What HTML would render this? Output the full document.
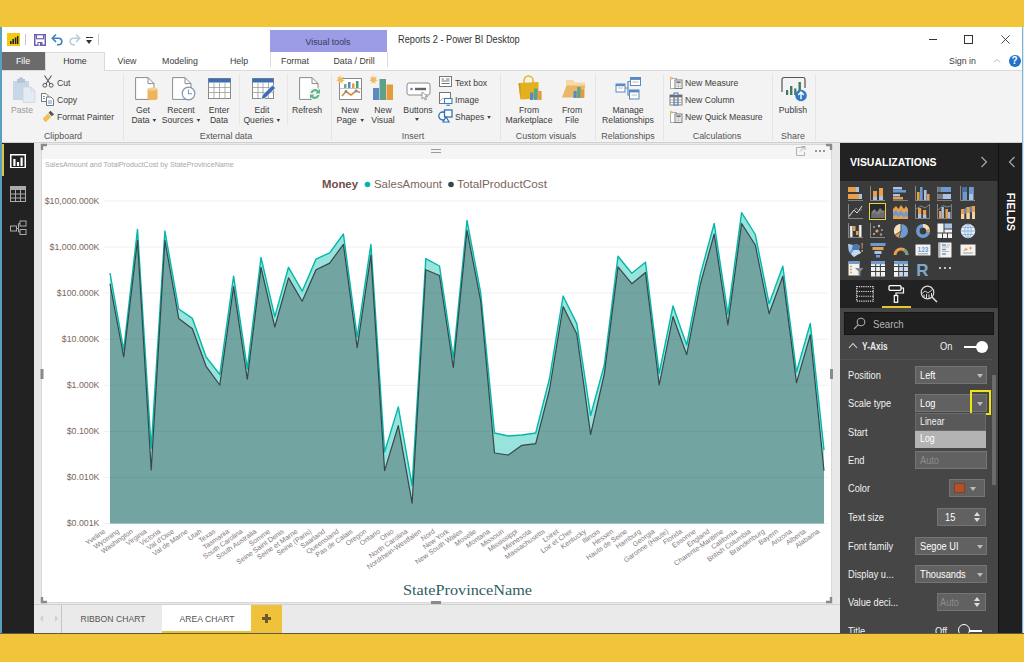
<!DOCTYPE html>
<html><head><meta charset="utf-8"><title>Reports 2 - Power BI Desktop</title>
<style>
*{box-sizing:border-box;margin:0;padding:0}
html,body{width:1024px;height:662px;overflow:hidden;background:#F2C43A;font-family:"Liberation Sans",sans-serif;}
.abs,.abs *{position:absolute}
#win{position:absolute;left:0;top:27px;width:1024px;height:607px;background:#fff;overflow:hidden}
.t{position:absolute;white-space:nowrap;font-size:9.4px;color:#3c3c3c;line-height:12px;transform-origin:0 50%;transform:scaleX(.92)}
.c{transform-origin:50% 50%;transform:translateX(-50%) scaleX(.92);text-align:center}
.da{display:inline-block;width:0;height:0;border-left:2.5px solid transparent;border-right:2.5px solid transparent;border-top:3px solid #444;vertical-align:middle;margin-left:1px}
.yl{font-size:9.8px;fill:#7d6660;font-family:"Liberation Sans",sans-serif}
.xl{font-size:7.05px;fill:#827a7a;font-family:"Liberation Sans",sans-serif}
.sep{position:absolute;width:1px;background:#e5e5e5;top:47px;height:66px}
.pt{position:absolute;white-space:nowrap;font-size:10.5px;color:#f2f2f2;line-height:12px;transform-origin:0 50%;transform:scaleX(.88)}
.dd{position:absolute;height:18px;background:#616161;border:1px solid #747474;color:#fff;font-size:11px;line-height:16px;padding-left:5px}
.arr{position:absolute;width:0;height:0;border-left:3px solid transparent;border-right:3px solid transparent;border-top:4px solid #bbb}
</style></head><body>
<div id="win">
<!-- window borders -->
<div style="position:absolute;left:0;top:0;width:1024px;height:1px;background:#7fb3c9"></div>
<div style="position:absolute;left:0;top:0;width:1.5px;height:607px;background:#5b9fbf;z-index:50"></div>
<div style="position:absolute;right:1px;top:0;width:1px;height:607px;background:#7db4d8;z-index:50"></div><div style="position:absolute;right:0;top:0;width:1px;height:607px;background:#dfe9ee;z-index:50"></div>

<div style="position:absolute;left:0;top:606px;width:1024px;height:1px;background:#5a5a4a;z-index:60"></div>
<!-- TITLE BAR -->
<div id="titlebar" style="position:absolute;left:0;top:0;width:1024px;height:25px;background:#fff">

<!-- app icon -->
<svg style="position:absolute;left:7px;top:6px" width="13" height="13" viewBox="0 0 13 13"><rect width="13" height="13" fill="#F2C811"/><rect x="3" y="8" width="1.6" height="3" fill="#222"/><rect x="5.4" y="6" width="1.6" height="5" fill="#222"/><rect x="7.8" y="4.5" width="1.6" height="6.5" fill="#222"/><rect x="10" y="3" width="1.4" height="8" fill="#222"/></svg>
<div style="position:absolute;left:25px;top:7px;width:1px;height:11px;background:#c8c8c8"></div>
<!-- save -->
<svg style="position:absolute;left:34px;top:7px" width="12" height="12" viewBox="0 0 12 12"><rect x="0.75" y="0.75" width="10.5" height="10.5" fill="#fff" stroke="#6a5fb5" stroke-width="1.5"/><rect x="2.5" y="0.75" width="7" height="4" fill="#fff" stroke="#6a5fb5" stroke-width="1.2"/><rect x="3.5" y="8" width="5" height="3.5" fill="#6a5fb5"/><rect x="4.5" y="9" width="1.5" height="2.5" fill="#fff"/></svg>
<!-- undo -->
<svg style="position:absolute;left:51px;top:6px" width="13" height="13" viewBox="0 0 13 13"><path d="M1.5 5.2 H7.5 A3.3 3.3 0 0 1 7.5 11.8 H6" fill="none" stroke="#3f7fc1" stroke-width="1.6"/><path d="M5 1.5 L1.3 5.2 L5 8.9" fill="none" stroke="#3f7fc1" stroke-width="1.6"/></svg>
<!-- redo -->
<svg style="position:absolute;left:68px;top:6px" width="13" height="13" viewBox="0 0 13 13"><path d="M11.5 5.2 H5.5 A3.3 3.3 0 0 0 5.5 11.8 H7" fill="none" stroke="#b9cfd6" stroke-width="1.6"/><path d="M8 1.5 L11.7 5.2 L8 8.9" fill="none" stroke="#b9cfd6" stroke-width="1.6"/></svg>
<!-- qat dropdown -->
<div style="position:absolute;left:86px;top:10px;width:7px;height:1px;background:#333"></div>
<div style="position:absolute;left:86px;top:13px;width:0;height:0;border-left:3.5px solid transparent;border-right:3.5px solid transparent;border-top:4px solid #333"></div>
<div style="position:absolute;left:98px;top:7px;width:1px;height:11px;background:#c8c8c8"></div>
<!-- visual tools -->
<div style="position:absolute;left:270px;top:3px;width:117px;height:21.5px;background:#9b9be6"></div>
<div class="t c" style="left:328px;top:8.5px;color:#3a3a55;font-size:9.6px">Visual tools</div>
<div class="t" style="left:398px;top:6.5px;color:#333;font-size:10px">Reports 2 - Power BI Desktop</div>
<!-- window controls -->
<div style="position:absolute;left:929px;top:12px;width:8px;height:1px;background:#333"></div>
<div style="position:absolute;left:964px;top:8px;width:9px;height:9px;border:1px solid #333"></div>
<svg style="position:absolute;left:1001px;top:8px" width="9" height="9" viewBox="0 0 11 11"><path d="M0.5 0.5 L10.5 10.5 M10.5 0.5 L0.5 10.5" stroke="#333" stroke-width="1.1"/></svg>

</div>

<!-- TAB ROW -->
<div id="tabs" style="position:absolute;left:0;top:25px;width:1024px;height:18px;background:#fff">

<div style="position:absolute;left:1px;top:0;width:44px;height:18px;background:#6b6b6b"></div>
<div class="t c" style="left:23px;top:3px;color:#fff;font-size:9.6px">File</div>
<div style="position:absolute;left:45px;top:0;width:60px;height:19px;background:#f3f3f3;border:1px solid #dadada;border-bottom:none;z-index:3"></div>
<div class="t c" style="left:75px;top:3px;color:#333;font-size:9.6px;z-index:4">Home</div>
<div class="t c" style="left:127px;top:3px;font-size:9.6px">View</div>
<div class="t c" style="left:180px;top:3px;font-size:9.6px">Modeling</div>
<div class="t c" style="left:239px;top:3px;font-size:9.6px">Help</div>
<div style="position:absolute;left:270px;top:0;width:1px;height:15px;background:#ddd"></div>
<div style="position:absolute;left:387px;top:0;width:1px;height:15px;background:#ddd"></div>
<div class="t c" style="left:295px;top:3px;font-size:9.6px">Format</div>
<div class="t c" style="left:354px;top:3px;font-size:9.6px">Data / Drill</div>
<div class="t" style="left:949px;top:3px;font-size:9.6px">Sign in</div>
<svg style="position:absolute;left:992.5px;top:5.5px" width="8" height="5.3" viewBox="0 0 9 6"><path d="M1 5 L4.5 1.5 L8 5" fill="none" stroke="#b5b5b5" stroke-width="1.1"/></svg>
<div style="position:absolute;left:1008.5px;top:2.5px;width:12px;height:12px;border-radius:6px;background:#1e74c9;color:#fff;font-size:10px;font-weight:bold;line-height:12px;text-align:center">?</div>

</div>

<!-- RIBBON -->
<div id="ribbon" style="position:absolute;left:0;top:43px;width:1024px;height:73px;background:#f3f3f3;border-top:1px solid #dadada;border-bottom:1px solid #d0d0d0">
</div>
<div id="ribbonitems" style="position:absolute;left:0;top:0;width:1024px;height:116px">
<svg style="position:absolute;left:12px;top:50px" width="24" height="26" viewBox="0 0 24 26">
<rect x="1" y="4" width="16" height="19" fill="#c9d6e6"/><rect x="5" y="2" width="8" height="4" fill="#b4c5da"/><rect x="7" y="0.5" width="4" height="3" fill="#b4c5da"/>
<path d="M11 10 H19 L23 14 V25.5 H11 Z" fill="#e4ebf3" stroke="#c3cfdd" stroke-width="0.6"/><path d="M19 10 V14 H23" fill="none" stroke="#c3cfdd" stroke-width="0.6"/></svg>
<div class="t c" style="left:22px;top:76.5px;color:#999">Paste</div>
<svg style="position:absolute;left:42px;top:48px" width="12" height="13" viewBox="0 0 12 13"><path d="M2.5 0.5 L8.2 9 M9.5 0.5 L3.8 9" stroke="#555" stroke-width="1.1" fill="none"/><circle cx="2.8" cy="10.3" r="1.9" fill="none" stroke="#555" stroke-width="1"/><circle cx="9.2" cy="10.3" r="1.9" fill="none" stroke="#555" stroke-width="1"/></svg>
<div class="t" style="left:57px;top:50px;">Cut</div>
<svg style="position:absolute;left:41px;top:66px" width="13" height="13" viewBox="0 0 13 13"><path d="M0.5 0.5 H5 L7 2.5 V8.5 H0.5 Z" fill="#fff" stroke="#666" stroke-width="0.9"/><path d="M5.5 4 H10 L12.5 6.5 V12.5 H5.5 Z" fill="#fff" stroke="#666" stroke-width="0.9"/><path d="M7 8 H11 M7 10 H11" stroke="#3f7fc1" stroke-width="0.8"/><path d="M2 3.5 H4 M2 5.5 H4" stroke="#3f7fc1" stroke-width="0.8"/></svg>
<div class="t" style="left:57px;top:67px;">Copy</div>
<svg style="position:absolute;left:42px;top:83px" width="13" height="13" viewBox="0 0 13 13"><path d="M8.5 0.8 L12 4.2 L9.8 6.2 L6.5 2.8 Z" fill="#555"/><path d="M6 3.5 L9.3 6.8 L4 12 L0.8 8.5 Z" fill="#f0c050"/><path d="M1.5 9.5 L3.5 11.5" stroke="#d9a030" stroke-width="0.8"/></svg>
<div class="t" style="left:57px;top:84px;">Format Painter</div>
<div class="t c" style="left:62.5px;top:103px;color:#555;font-size:9.7px">Clipboard</div>
<div class="sep" style="left:123px"></div>
<svg style="position:absolute;left:135px;top:50px" width="24" height="24" viewBox="0 0 24 24"><path d="M0.6 0.6 H13 L19 6.6 V22.4 H0.6 Z" fill="#fff" stroke="#8a8a8a" stroke-width="1"/><path d="M13 0.6 V6.6 H19" fill="none" stroke="#8a8a8a" stroke-width="1"/>
<path d="M12.5 12 V21.5 A5 1.6 0 0 0 22.5 21.5 V12 Z" fill="#eeb45c"/><ellipse cx="17.5" cy="12" rx="5" ry="1.6" fill="#f6cf92"/></svg>
<div class="t c" style="left:143px;top:76.5px;">Get</div>
<div class="t c" style="left:144px;top:87px;">Data <span class="da"></span></div>
<svg style="position:absolute;left:172px;top:50px" width="24" height="24" viewBox="0 0 24 24"><path d="M0.6 0.6 H13 L19 6.6 V22.4 H0.6 Z" fill="#fff" stroke="#8a8a8a" stroke-width="1"/><path d="M13 0.6 V6.6 H19" fill="none" stroke="#8a8a8a" stroke-width="1"/>
<circle cx="16.5" cy="16.5" r="6.3" fill="#fff" stroke="#7f98b0" stroke-width="1.2"/><path d="M16.5 12.5 V16.8 H20" fill="none" stroke="#7f98b0" stroke-width="1.1"/></svg>
<div class="t c" style="left:181px;top:76.5px;">Recent</div>
<div class="t c" style="left:181px;top:87px;">Sources <span class="da"></span></div>
<svg style="position:absolute;left:208px;top:51px" width="23" height="21" viewBox="0 0 23 21"><rect x="0.5" y="0.5" width="22" height="20" fill="#fff" stroke="#8a8a8a"/><rect x="0.5" y="0.5" width="22" height="4" fill="#3c6db0"/><path d="M0.5 9.5 H22.5 M0.5 14.5 H22.5 M6 4.5 V20.5 M11.5 4.5 V20.5 M17 4.5 V20.5" stroke="#9a9a9a" stroke-width="0.8"/></svg>
<div class="t c" style="left:219px;top:76.5px;">Enter</div>
<div class="t c" style="left:219px;top:87px;">Data</div>
<div class="sep" style="left:239px;background:#e6e6e6;height:50px"></div>
<svg style="position:absolute;left:252px;top:50px" width="24" height="24" viewBox="0 0 24 24"><rect x="0.5" y="1.5" width="21" height="20" fill="#fff" stroke="#8a8a8a"/><rect x="0.5" y="1.5" width="21" height="4" fill="#3c6db0"/><path d="M0.5 10.5 H21.5 M0.5 15.5 H21.5 M6 5.5 V21.5 M11 5.5 V21.5 M16.5 5.5 V21.5" stroke="#9a9a9a" stroke-width="0.8"/><path d="M9 22.5 L10.5 18 L20.5 8 L23.5 11 L13.5 21 Z" fill="#3c6db0" stroke="#fff" stroke-width="0.7"/></svg>
<div class="t c" style="left:262px;top:76.5px;">Edit</div>
<div class="t c" style="left:262px;top:87px;">Queries <span class="da"></span></div>
<div class="sep" style="left:287px;background:#e6e6e6;height:50px"></div>
<svg style="position:absolute;left:299px;top:50px" width="24" height="24" viewBox="0 0 24 24"><path d="M0.6 0.6 H13 L19 6.6 V22.4 H0.6 Z" fill="#fff" stroke="#8a8a8a" stroke-width="1"/><path d="M13 0.6 V6.6 H19" fill="none" stroke="#8a8a8a" stroke-width="1"/>
<circle cx="16" cy="17" r="6.5" fill="#f3f3f3"/><path d="M11.5 16 A4.6 4.6 0 0 1 19.5 13.5 L21 12 V16.5 H16.5 L18 15 A2.6 2.6 0 0 0 13.7 16 Z" fill="#5fb58a"/><path d="M20.5 18 A4.6 4.6 0 0 1 12.5 20.5 L11 22 V17.5 H15.5 L14 19 A2.6 2.6 0 0 0 18.3 18 Z" fill="#5fb58a"/></svg>
<div class="t c" style="left:307px;top:76.5px;">Refresh</div>
<div class="t c" style="left:226px;top:103px;color:#555;font-size:9.7px">External data</div>
<div class="sep" style="left:331px"></div>
<svg style="position:absolute;left:336px;top:48px" width="28" height="27" viewBox="0 0 28 27"><rect x="3.5" y="3.5" width="22" height="21" fill="#fff" stroke="#8a8a8a"/>
<rect x="8" y="9" width="2.5" height="4" fill="#6fa88a"/><rect x="12" y="7" width="2.5" height="6" fill="#5b89c0"/><rect x="16" y="8.5" width="2.5" height="4.5" fill="#e59a3c"/><rect x="20" y="6" width="2.5" height="7" fill="#4f9a7b"/><path d="M4 13.5 H25" stroke="#aaa" stroke-width="0.7"/>
<path d="M6 21 L10 16.5 L15 20 L20 16 L24 17.5" fill="none" stroke="#d9823b" stroke-width="1.6"/><circle cx="10" cy="16.5" r="1.4" fill="#5fa08a"/><circle cx="20" cy="16" r="1.4" fill="#5fa08a"/><path d="M4 0 L5 2.7 L7.8 1.6 L6.6 4.2 L9 5.5 L6.3 6 L6.6 8.8 L4.5 7 L2.5 8.8 L2.6 6 L0 5.5 L2.3 4.2 L1 1.6 L3.4 2.7 Z" fill="#f0b95a"/></svg>
<div class="t c" style="left:350px;top:76.5px;">New</div>
<div class="t c" style="left:350px;top:87px;">Page <span class="da"></span></div>
<svg style="position:absolute;left:369px;top:48px" width="27" height="27" viewBox="0 0 27 27"><rect x="4" y="13" width="6" height="12" fill="#5b89c0"/><rect x="10.5" y="4" width="6.5" height="21" fill="#5fa08a"/><rect x="17.5" y="9.5" width="6.5" height="15.5" fill="#e59a3c"/><path d="M4 0 L5 2.7 L7.8 1.6 L6.6 4.2 L9 5.5 L6.3 6 L6.6 8.8 L4.5 7 L2.5 8.8 L2.6 6 L0 5.5 L2.3 4.2 L1 1.6 L3.4 2.7 Z" fill="#f0b95a"/></svg>
<div class="t c" style="left:383px;top:76.5px;">New</div>
<div class="t c" style="left:383px;top:87px;">Visual</div>
<svg style="position:absolute;left:406px;top:55px" width="26" height="19" viewBox="0 0 26 19"><rect x="1" y="1" width="23" height="12" rx="2" fill="#fff" stroke="#8a8a8a" stroke-width="1"/><circle cx="5.5" cy="7" r="1.3" fill="#5b89c0"/><rect x="9" y="5.8" width="11" height="2.4" fill="#666"/><path d="M16 10 L16 17 L18 15.3 L19.3 18 L20.5 17.4 L19.2 14.8 L21.6 14.6 Z" fill="#fff" stroke="#777" stroke-width="0.7"/></svg>
<div class="t c" style="left:418px;top:76.5px;">Buttons</div>
<div class="da" style="position:absolute;left:415px;top:91px;margin:0"></div>
<svg style="position:absolute;left:439px;top:49px" width="13" height="11" viewBox="0 0 13 11"><rect x="0.5" y="0.5" width="12" height="10" fill="#fff" stroke="#777"/><path d="M2.5 3 H5 M2.5 5 H10.5 M2.5 7.5 H10.5 M7 3 H10.5" stroke="#666" stroke-width="0.9"/></svg>
<div class="t" style="left:455px;top:50px;">Text box</div>
<svg style="position:absolute;left:439px;top:65px" width="14" height="14" viewBox="0 0 14 14"><rect x="0.5" y="0.5" width="11" height="11" fill="#fff" stroke="#777"/><path d="M1 9 L4 6 L6.5 8.5" fill="none" stroke="#999" stroke-width="0.8"/><rect x="5.5" y="6.5" width="7.5" height="5" fill="#fff" stroke="#3c7fc0" stroke-width="1.1"/><path d="M7.5 13.3 H11" stroke="#3c7fc0" stroke-width="1.1"/></svg>
<div class="t" style="left:455px;top:67px;">Image</div>
<svg style="position:absolute;left:438px;top:82px" width="15" height="14" viewBox="0 0 15 14"><circle cx="4.8" cy="7" r="4" fill="#fff" stroke="#2e6fb5" stroke-width="1.3"/><rect x="6.5" y="1" width="7.5" height="7" fill="#fff" stroke="#2e6fb5" stroke-width="1.3"/><path d="M5 13 L8 8 L11 13 Z" fill="#fff" stroke="#2e6fb5" stroke-width="1.2"/></svg>
<div class="t" style="left:455px;top:84px;">Shapes <span class="da"></span></div>
<div class="t c" style="left:413px;top:103px;color:#555;font-size:9.7px">Insert</div>
<div class="sep" style="left:500px"></div>
<svg style="position:absolute;left:517px;top:48px" width="27" height="27" viewBox="0 0 27 27"><path d="M7 8 V5.5 A4.5 4.5 0 0 1 16 5.5 V8" fill="none" stroke="#e7b52a" stroke-width="1.5"/><path d="M1.5 8 L21.5 7 L21.5 23.5 L3.5 24.5 Z" fill="#e3b01f"/><path d="M1.5 8 L3.5 24.5 L3.5 9.5 Z" fill="#c99612"/><rect x="13" y="17.5" width="3.4" height="7.5" fill="#5b89c0"/><rect x="17" y="13.5" width="3.6" height="11.5" fill="#5fa08a"/><rect x="21.2" y="16" width="3.4" height="9" fill="#e59a3c"/></svg>
<div class="t c" style="left:529px;top:76.5px;">From</div>
<div class="t c" style="left:529px;top:87px;">Marketplace</div>
<svg style="position:absolute;left:561px;top:50px" width="26" height="23" viewBox="0 0 26 23"><path d="M5 3 H12 L14 5.5 H24 V20 H5 Z" fill="#f5d9a6"/><path d="M1 20.5 L5.5 8.5 H24.5 L20 20.5 Z" fill="#eab765"/><rect x="12.5" y="14" width="3.2" height="7" fill="#5b89c0"/><rect x="16.2" y="10" width="3.4" height="11" fill="#5fa08a"/><rect x="20" y="12.5" width="3.2" height="8.5" fill="#e59a3c"/></svg>
<div class="t c" style="left:572px;top:76.5px;">From</div>
<div class="t c" style="left:572px;top:87px;">File</div>
<div class="t c" style="left:546px;top:103px;color:#555;font-size:9.7px">Custom visuals</div>
<div class="sep" style="left:595px"></div>
<svg style="position:absolute;left:615px;top:48px" width="27" height="27" viewBox="0 0 27 27"><path d="M10 13 H13 V6.500 H16 M13 13 V20 H16" fill="none" stroke="#5b89c0" stroke-width="1.2"/><rect x="1" y="9" width="9" height="8" fill="#fff" stroke="#5b89c0" stroke-width="1"/><rect x="1" y="9" width="9" height="2.2" fill="#5b89c0"/><rect x="15.5" y="2.500" width="10" height="8" fill="#fff" stroke="#5b89c0" stroke-width="1"/><rect x="15.5" y="2.500" width="10" height="2.4" fill="#5b89c0"/><rect x="14.5" y="15" width="9.5" height="9" fill="#fff" stroke="#5b89c0" stroke-width="1"/><rect x="14.5" y="15" width="9.5" height="2.4" fill="#5b89c0"/><path d="M3 13 H8 M17.5 7 H23.5 M16.5 20 H22" stroke="#aaa" stroke-width="0.8"/></svg>
<div class="t c" style="left:628px;top:76.5px;">Manage</div>
<div class="t c" style="left:628px;top:87px;">Relationships</div>
<div class="t c" style="left:628px;top:103px;color:#555;font-size:9.7px">Relationships</div>
<div class="sep" style="left:663px"></div>
<svg style="position:absolute;left:669px;top:49px" width="14" height="13" viewBox="0 0 14 13"><rect x="1.5" y="2.5" width="6" height="10" fill="#fff" stroke="#999" stroke-width="0.8"/><rect x="6" y="4" width="7" height="8.5" fill="#fff" stroke="#6e6e6e" stroke-width="0.9"/><rect x="7.3" y="5.3" width="4.4" height="2" fill="#777"/><path d="M7.5 9 H11.5 M7.5 10.8 H11.5" stroke="#777" stroke-width="0.9" stroke-dasharray="1 0.6"/><path d="M2.2 0 L2.8 1.4 L4.3 1.6 L3.1 2.6 L3.5 4 L2.2 3.2 L0.9 4 L1.3 2.6 L0.1 1.6 L1.6 1.4 Z" fill="#f0b95a"/></svg>
<div class="t" style="left:685px;top:50px;">New Measure</div>
<svg style="position:absolute;left:669px;top:65px" width="14" height="14" viewBox="0 0 14 14"><rect x="1" y="3" width="12" height="10" fill="#fff" stroke="#777" stroke-width="0.9"/><rect x="5" y="1" width="4" height="12" fill="#dbe7f5" stroke="#3c6db0" stroke-width="0.9"/><rect x="1" y="3" width="12" height="2.3" fill="#6a6a6a"/><path d="M1 8 H13 M1 10.5 H13 M5 3 V13 M9 3 V13" stroke="#888" stroke-width="0.7"/></svg>
<div class="t" style="left:685px;top:67px;">New Column</div>
<svg style="position:absolute;left:669px;top:83px" width="14" height="13" viewBox="0 0 14 13"><rect x="1.5" y="2.5" width="6" height="10" fill="#fff" stroke="#999" stroke-width="0.8"/><rect x="6" y="4" width="7" height="8.5" fill="#fff" stroke="#6e6e6e" stroke-width="0.9"/><rect x="7.3" y="5.3" width="4.4" height="2" fill="#777"/><path d="M7.5 9 H11.5 M7.5 10.8 H11.5" stroke="#777" stroke-width="0.9" stroke-dasharray="1 0.6"/><path d="M2.2 0 L2.8 1.4 L4.3 1.6 L3.1 2.6 L3.5 4 L2.2 3.2 L0.9 4 L1.3 2.6 L0.1 1.6 L1.6 1.4 Z" fill="#f0b95a"/></svg>
<div class="t" style="left:685px;top:84px;">New Quick Measure</div>
<div class="t c" style="left:717px;top:103px;color:#555;font-size:9.7px">Calculations</div>
<div class="sep" style="left:772px"></div>
<svg style="position:absolute;left:780px;top:49px" width="28" height="27" viewBox="0 0 28 27"><path d="M2 16 V3.5 A2 2 0 0 1 4 1.5 H23 A2 2 0 0 1 25 3.5 V12" fill="none" stroke="#555" stroke-width="1.2"/><rect x="6" y="14" width="2.2" height="5" fill="#3d7a5f"/><rect x="10" y="10" width="2.4" height="9" fill="#3d7a5f"/><rect x="14.2" y="12.5" width="2.2" height="6.5" fill="#3d7a5f"/><rect x="18.5" y="6" width="2.4" height="10" fill="#3d7a5f"/><circle cx="21" cy="19.5" r="5.8" fill="#2f79c5"/><path d="M21 23.2 V16.2 M18.2 19 L21 16 L23.8 19" fill="none" stroke="#fff" stroke-width="1.4"/></svg>
<div class="t c" style="left:793px;top:76.5px;">Publish</div>
<div class="t c" style="left:793px;top:103px;color:#555;font-size:9.7px">Share</div>
<div class="sep" style="left:815px"></div>
</div>

<!-- MAIN -->
<div id="main" style="position:absolute;left:0;top:116px;width:1024px;height:491px;background:#e8e8e8">
  <div id="leftnav" style="position:absolute;left:1px;top:0;width:33px;height:491px;background:#222">
  
<div style="position:absolute;left:0;top:1px;width:2.5px;height:32px;background:#dcc648"></div>
<svg style="position:absolute;left:9px;top:10.500px" width="16" height="14.500" viewBox="0 0 16 14.500"><rect x="0.75" y="0.75" width="14.5" height="13" fill="none" stroke="#fff" stroke-width="1.5"/><rect x="3.300" y="5" width="2.200" height="7" fill="#fff"/><rect x="6.900" y="8" width="2.200" height="4" fill="#fff"/><rect x="10.500" y="3.500" width="2.200" height="8.500" fill="#fff"/></svg>
<svg style="position:absolute;left:9px;top:43.300px" width="16" height="16" viewBox="0 0 16 16"><rect x="0.5" y="0.5" width="15" height="15" fill="none" stroke="#aaa" stroke-width="1"/><rect x="0.5" y="0.5" width="15" height="3.5" fill="#aaa"/><path d="M0.5 8 H15.5 M0.5 12 H15.5 M5.5 4 V15.5 M10.5 4 V15.5" stroke="#aaa" stroke-width="1"/></svg>
<svg style="position:absolute;left:9px;top:77px" width="17" height="16" viewBox="0 0 17 16"><rect x="0.5" y="6" width="6" height="5" fill="none" stroke="#aaa"/><rect x="10" y="1" width="6" height="5" fill="none" stroke="#aaa"/><rect x="10" y="9.5" width="6" height="5" fill="none" stroke="#aaa"/><path d="M6.5 8.5 H8.5 V3.5 H10 M8.5 8.5 V12 H10" fill="none" stroke="#aaa"/></svg>

  </div>
  <div id="visual" style="position:absolute;left:41px;top:1px;width:791px;height:459px;background:#fff;border:1px solid #d8d8d8">
    <div style="position:absolute;left:0;top:0;width:789px;height:14px;background:#f5f5f5"></div>
  </div>
  <div id="pagetabs" style="position:absolute;left:34px;top:461px;width:806px;height:30px;background:#eaeaea;border-top:1px solid #d2d2d2">
  
<svg style="position:absolute;left:5px;top:9px" width="20" height="9" viewBox="0 0 20 9"><path d="M4 1 L1 4.5 L4 8 Z M16 1 L19 4.5 L16 8 Z" fill="#cfcfcf"/></svg>
<div style="position:absolute;left:27px;top:0;width:1px;height:28px;background:#c4c4c4"></div>
<div class="t c" style="left:79px;top:8px;font-size:9.4px;color:#555">RIBBON CHART</div>
<div style="position:absolute;left:128px;top:0px;width:89px;height:28px;background:#fff;border-bottom:2px solid #e8c52c"></div>
<div class="t c" style="left:173px;top:8px;font-size:9.4px;color:#555">AREA CHART</div>
<div style="position:absolute;left:217px;top:0px;width:31px;height:28px;background:#f0c13a"></div>
<div style="position:absolute;left:228px;top:12px;width:9px;height:3px;background:#6b5a2a"></div>
<div style="position:absolute;left:231px;top:9px;width:3px;height:9px;background:#6b5a2a"></div>

  </div>
</div>

<!-- CHART SVG in page coords (offset by window top 27) -->
<svg style="position:absolute;left:0;top:-27px" width="840" height="662" viewBox="0 0 840 662">
<line x1="104" x2="828" y1="201.0" y2="201.0" stroke="#f0f0f0" stroke-width="1"/>
<g transform="translate(99.5,203.7) scale(0.9,1)"><text x="0" y="0" text-anchor="end" class="yl">$10,000.000K</text></g>
<line x1="104" x2="828" y1="247.1" y2="247.1" stroke="#f0f0f0" stroke-width="1"/>
<g transform="translate(99.5,249.8) scale(0.9,1)"><text x="0" y="0" text-anchor="end" class="yl">$1,000.000K</text></g>
<line x1="104" x2="828" y1="293.1" y2="293.1" stroke="#f0f0f0" stroke-width="1"/>
<g transform="translate(99.5,295.8) scale(0.9,1)"><text x="0" y="0" text-anchor="end" class="yl">$100.000K</text></g>
<line x1="104" x2="828" y1="339.2" y2="339.2" stroke="#f0f0f0" stroke-width="1"/>
<g transform="translate(99.5,341.9) scale(0.9,1)"><text x="0" y="0" text-anchor="end" class="yl">$10.000K</text></g>
<line x1="104" x2="828" y1="385.3" y2="385.3" stroke="#f0f0f0" stroke-width="1"/>
<g transform="translate(99.5,388.0) scale(0.9,1)"><text x="0" y="0" text-anchor="end" class="yl">$1.000K</text></g>
<line x1="104" x2="828" y1="431.4" y2="431.4" stroke="#f0f0f0" stroke-width="1"/>
<g transform="translate(99.5,434.1) scale(0.9,1)"><text x="0" y="0" text-anchor="end" class="yl">$0.100K</text></g>
<line x1="104" x2="828" y1="477.4" y2="477.4" stroke="#f0f0f0" stroke-width="1"/>
<g transform="translate(99.5,480.1) scale(0.9,1)"><text x="0" y="0" text-anchor="end" class="yl">$0.010K</text></g>
<line x1="104" x2="828" y1="523.5" y2="523.5" stroke="#f0f0f0" stroke-width="1"/>
<g transform="translate(99.5,526.2) scale(0.9,1)"><text x="0" y="0" text-anchor="end" class="yl">$0.001K</text></g>
<polygon points="110.0,523.5 110.0,273.2 123.7,350.0 137.5,229.4 151.2,448.3 164.9,231.0 178.7,309.0 192.4,318.4 206.1,357.0 219.8,374.5 233.6,276.2 247.3,368.7 261.0,257.5 274.8,316.6 288.5,267.3 302.2,291.2 316.0,259.1 329.7,252.8 343.4,234.0 357.2,337.0 370.9,244.4 384.6,452.0 398.3,406.9 412.1,485.6 425.8,258.7 439.5,266.0 453.3,358.0 467.0,220.5 480.7,293.0 494.5,433.0 508.2,436.0 521.9,435.0 535.7,433.0 549.4,379.0 563.1,296.0 576.8,323.6 590.6,415.5 604.3,365.0 618.0,256.3 631.8,273.2 645.5,262.2 659.2,373.4 673.0,306.0 686.7,345.0 700.4,274.4 714.2,223.5 727.9,314.2 741.6,212.7 755.3,234.5 769.1,303.7 782.8,266.2 796.5,372.0 810.3,323.4 824.0,450.0 824.0,523.5" fill="#01B8AA" fill-opacity="0.4"/>
<polygon points="110.0,523.5 110.0,283.7 123.7,357.0 137.5,240.4 151.2,470.0 164.9,240.4 178.7,318.4 192.4,328.7 206.1,366.3 219.8,385.0 233.6,286.6 247.3,379.2 261.0,267.3 274.8,327.0 288.5,277.9 302.2,301.3 316.0,269.7 329.7,263.1 343.4,244.4 357.2,347.6 370.9,255.0 384.6,470.6 398.3,425.6 412.1,503.2 425.8,269.7 439.5,275.5 453.3,367.5 467.0,230.3 480.7,301.0 494.5,453.0 508.2,455.0 521.9,445.3 535.7,443.7 549.4,390.0 563.1,306.5 576.8,334.0 590.6,434.3 604.3,374.0 618.0,266.9 631.8,283.7 645.5,272.5 659.2,385.0 673.0,316.5 686.7,354.6 700.4,284.0 714.2,234.0 727.9,324.8 741.6,223.5 755.3,245.0 769.1,313.7 782.8,276.2 796.5,382.7 810.3,334.8 824.0,470.7 824.0,523.5" fill="#374649" fill-opacity="0.4"/>
<polyline points="110.0,273.2 123.7,350.0 137.5,229.4 151.2,448.3 164.9,231.0 178.7,309.0 192.4,318.4 206.1,357.0 219.8,374.5 233.6,276.2 247.3,368.7 261.0,257.5 274.8,316.6 288.5,267.3 302.2,291.2 316.0,259.1 329.7,252.8 343.4,234.0 357.2,337.0 370.9,244.4 384.6,452.0 398.3,406.9 412.1,485.6 425.8,258.7 439.5,266.0 453.3,358.0 467.0,220.5 480.7,293.0 494.5,433.0 508.2,436.0 521.9,435.0 535.7,433.0 549.4,379.0 563.1,296.0 576.8,323.6 590.6,415.5 604.3,365.0 618.0,256.3 631.8,273.2 645.5,262.2 659.2,373.4 673.0,306.0 686.7,345.0 700.4,274.4 714.2,223.5 727.9,314.2 741.6,212.7 755.3,234.5 769.1,303.7 782.8,266.2 796.5,372.0 810.3,323.4 824.0,450.0" fill="none" stroke="#01B8AA" stroke-width="1.4" stroke-linejoin="round"/>
<polyline points="110.0,283.7 123.7,357.0 137.5,240.4 151.2,470.0 164.9,240.4 178.7,318.4 192.4,328.7 206.1,366.3 219.8,385.0 233.6,286.6 247.3,379.2 261.0,267.3 274.8,327.0 288.5,277.9 302.2,301.3 316.0,269.7 329.7,263.1 343.4,244.4 357.2,347.6 370.9,255.0 384.6,470.6 398.3,425.6 412.1,503.2 425.8,269.7 439.5,275.5 453.3,367.5 467.0,230.3 480.7,301.0 494.5,453.0 508.2,455.0 521.9,445.3 535.7,443.7 549.4,390.0 563.1,306.5 576.8,334.0 590.6,434.3 604.3,374.0 618.0,266.9 631.8,283.7 645.5,272.5 659.2,385.0 673.0,316.5 686.7,354.6 700.4,284.0 714.2,234.0 727.9,324.8 741.6,223.5 755.3,245.0 769.1,313.7 782.8,276.2 796.5,382.7 810.3,334.8 824.0,470.7" fill="none" stroke="#374649" stroke-width="1.2" stroke-linejoin="round"/>
<text transform="translate(106.0,532.5) rotate(-35)" text-anchor="end" class="xl">Yveline</text>
<text transform="translate(119.7,532.5) rotate(-35)" text-anchor="end" class="xl">Wyoming</text>
<text transform="translate(133.5,532.5) rotate(-35)" text-anchor="end" class="xl">Washington</text>
<text transform="translate(147.2,532.5) rotate(-35)" text-anchor="end" class="xl">Virginia</text>
<text transform="translate(160.9,532.5) rotate(-35)" text-anchor="end" class="xl">Victoria</text>
<text transform="translate(174.7,532.5) rotate(-35)" text-anchor="end" class="xl">Val d&#39;Oise</text>
<text transform="translate(188.4,532.5) rotate(-35)" text-anchor="end" class="xl">Val de Marne</text>
<text transform="translate(202.1,532.5) rotate(-35)" text-anchor="end" class="xl">Utah</text>
<text transform="translate(215.8,532.5) rotate(-35)" text-anchor="end" class="xl">Texas</text>
<text transform="translate(229.6,532.5) rotate(-35)" text-anchor="end" class="xl">Tasmania</text>
<text transform="translate(243.3,532.5) rotate(-35)" text-anchor="end" class="xl">South Carolina</text>
<text transform="translate(257.0,532.5) rotate(-35)" text-anchor="end" class="xl">South Australia</text>
<text transform="translate(270.8,532.5) rotate(-35)" text-anchor="end" class="xl">Somme</text>
<text transform="translate(284.5,532.5) rotate(-35)" text-anchor="end" class="xl">Seine Saint Denis</text>
<text transform="translate(298.2,532.5) rotate(-35)" text-anchor="end" class="xl">Seine et Marne</text>
<text transform="translate(312.0,532.5) rotate(-35)" text-anchor="end" class="xl">Seine (Paris)</text>
<text transform="translate(325.7,532.5) rotate(-35)" text-anchor="end" class="xl">Saarland</text>
<text transform="translate(339.4,532.5) rotate(-35)" text-anchor="end" class="xl">Queensland</text>
<text transform="translate(353.2,532.5) rotate(-35)" text-anchor="end" class="xl">Pas de Calais</text>
<text transform="translate(366.9,532.5) rotate(-35)" text-anchor="end" class="xl">Oregon</text>
<text transform="translate(380.6,532.5) rotate(-35)" text-anchor="end" class="xl">Ontario</text>
<text transform="translate(394.3,532.5) rotate(-35)" text-anchor="end" class="xl">Ohio</text>
<text transform="translate(408.1,532.5) rotate(-35)" text-anchor="end" class="xl">North Carolina</text>
<text transform="translate(421.8,532.5) rotate(-35)" text-anchor="end" class="xl">Nordrhein-Westfalen</text>
<text transform="translate(435.5,532.5) rotate(-35)" text-anchor="end" class="xl">Nord</text>
<text transform="translate(449.3,532.5) rotate(-35)" text-anchor="end" class="xl">New York</text>
<text transform="translate(463.0,532.5) rotate(-35)" text-anchor="end" class="xl">New South Wales</text>
<text transform="translate(476.7,532.5) rotate(-35)" text-anchor="end" class="xl">Moselle</text>
<text transform="translate(490.5,532.5) rotate(-35)" text-anchor="end" class="xl">Montana</text>
<text transform="translate(504.2,532.5) rotate(-35)" text-anchor="end" class="xl">Missouri</text>
<text transform="translate(517.9,532.5) rotate(-35)" text-anchor="end" class="xl">Mississippi</text>
<text transform="translate(531.7,532.5) rotate(-35)" text-anchor="end" class="xl">Minnesota</text>
<text transform="translate(545.4,532.5) rotate(-35)" text-anchor="end" class="xl">Massachusetts</text>
<text transform="translate(559.1,532.5) rotate(-35)" text-anchor="end" class="xl">Loiret</text>
<text transform="translate(572.8,532.5) rotate(-35)" text-anchor="end" class="xl">Loir et Cher</text>
<text transform="translate(586.6,532.5) rotate(-35)" text-anchor="end" class="xl">Kentucky</text>
<text transform="translate(600.3,532.5) rotate(-35)" text-anchor="end" class="xl">Illinois</text>
<text transform="translate(614.0,532.5) rotate(-35)" text-anchor="end" class="xl">Hessen</text>
<text transform="translate(627.8,532.5) rotate(-35)" text-anchor="end" class="xl">Hauts de Seine</text>
<text transform="translate(641.5,532.5) rotate(-35)" text-anchor="end" class="xl">Hamburg</text>
<text transform="translate(655.2,532.5) rotate(-35)" text-anchor="end" class="xl">Georgia</text>
<text transform="translate(669.0,532.5) rotate(-35)" text-anchor="end" class="xl">Garonne (Haute)</text>
<text transform="translate(682.7,532.5) rotate(-35)" text-anchor="end" class="xl">Florida</text>
<text transform="translate(696.4,532.5) rotate(-35)" text-anchor="end" class="xl">Essonne</text>
<text transform="translate(710.2,532.5) rotate(-35)" text-anchor="end" class="xl">England</text>
<text transform="translate(723.9,532.5) rotate(-35)" text-anchor="end" class="xl">Charente-Maritime</text>
<text transform="translate(737.6,532.5) rotate(-35)" text-anchor="end" class="xl">California</text>
<text transform="translate(751.3,532.5) rotate(-35)" text-anchor="end" class="xl">British Columbia</text>
<text transform="translate(765.1,532.5) rotate(-35)" text-anchor="end" class="xl">Brandenburg</text>
<text transform="translate(778.8,532.5) rotate(-35)" text-anchor="end" class="xl">Bayern</text>
<text transform="translate(792.5,532.5) rotate(-35)" text-anchor="end" class="xl">Arizona</text>
<text transform="translate(806.3,532.5) rotate(-35)" text-anchor="end" class="xl">Alberta</text>
<text transform="translate(820.0,532.5) rotate(-35)" text-anchor="end" class="xl">Alabama</text>

<text x="45" y="167" style="font-size:7.2px;fill:#a8a8a8;font-family:'Liberation Sans',sans-serif">SalesAmount and TotalProductCost by StateProvinceName</text>
<text x="322" y="188" style="font-size:11.5px;font-weight:bold;fill:#6f4e47;font-family:'Liberation Sans',sans-serif" textLength="36" lengthAdjust="spacingAndGlyphs">Money</text>
<circle cx="367.500" cy="184.5" r="2.8" fill="#01B8AA"/>
<text x="374" y="188" style="font-size:11.5px;fill:#7d635c;font-family:'Liberation Sans',sans-serif" textLength="68" lengthAdjust="spacingAndGlyphs">SalesAmount</text>
<circle cx="451" cy="184.5" r="2.8" fill="#374649"/>
<text x="457" y="188" style="font-size:11.5px;fill:#7d635c;font-family:'Liberation Sans',sans-serif" textLength="90" lengthAdjust="spacingAndGlyphs">TotalProductCost</text>
<text x="403" y="595" textLength="129" lengthAdjust="spacingAndGlyphs" style="font-size:15.5px;fill:#2f5d63;font-family:'Liberation Serif',serif">StateProvinceName</text>
<!-- header icons -->
<path d="M431 149.500 H441 M431 152.500 H441" stroke="#999" stroke-width="1"/>
<path d="M803.500 147.500 H796.500 V155.500 H804.500 V152 M800 151.500 L805 146.500 M801.500 146.500 H805 V150" fill="none" stroke="#aaa" stroke-width="0.9"/>
<circle cx="816" cy="151" r="1" fill="#777"/><circle cx="820" cy="151" r="1" fill="#777"/><circle cx="824" cy="151" r="1" fill="#777"/>
<!-- selection handles -->
<path d="M42 150 V145 H47" fill="none" stroke="#8a8a8a" stroke-width="2.4"/>
<path d="M826 145 H831 V150" fill="none" stroke="#8a8a8a" stroke-width="2.4"/>
<path d="M42 597 V602 H47" fill="none" stroke="#8a8a8a" stroke-width="2.4"/>
<path d="M826 602 H831 V597" fill="none" stroke="#8a8a8a" stroke-width="2.4"/>
<rect x="431" y="601" width="10" height="3" fill="#8a8a8a"/>
<rect x="40.500" y="369" width="3" height="10" fill="#8a8a8a"/>
<rect x="830" y="369" width="3" height="10" fill="#8a8a8a"/>

</svg>

<!-- RIGHT PANEL -->
<div id="viz" style="position:absolute;left:840px;top:116px;width:158px;height:491px;background:#222;overflow:hidden">
<div class="pt" style="left:10px;top:13px;font-weight:bold;font-size:11.5px;color:#fff;transform:scaleX(.91)">VISUALIZATIONS</div>
<svg style="position:absolute;left:140px;top:13px" width="8" height="12" viewBox="0 0 8 12"><path d="M1.500 1 L6.500 6 L1.500 11" fill="none" stroke="#a8a8a8" stroke-width="1.2"/></svg>
<div style="position:absolute;left:0;top:38px;width:158px;height:99px;background:#3b3b3b;border-right:1px solid #2a2a2a"></div>
<svg style="position:absolute;left:8.0px;top:42.5px" width="16" height="16" viewBox="0 0 16 16"><rect x="0" y="1" width="8" height="5" fill="#e8a04c"/><rect x="8" y="1" width="3" height="5" fill="#a9c4e6"/><rect x="0" y="8" width="11" height="5" fill="#e8a04c"/><rect x="11" y="8" width="3" height="5" fill="#a9c4e6"/><path d="M0 14.5 H15" stroke="#9a9a9a" stroke-width="0.7"/></svg>
<svg style="position:absolute;left:30.3px;top:42.5px" width="16" height="16" viewBox="0 0 16 16"><path d="M0.5 0 V14.5 H15" fill="none" stroke="#9a9a9a" stroke-width="0.8"/><rect x="3" y="5" width="4" height="9" fill="#e8a04c"/><rect x="3" y="11" width="4" height="3" fill="#a9c4e6"/><rect x="9" y="2" width="4" height="12" fill="#e8a04c"/><rect x="9" y="10" width="4" height="4" fill="#a9c4e6"/></svg>
<svg style="position:absolute;left:52.6px;top:42.5px" width="16" height="16" viewBox="0 0 16 16"><rect x="0" y="1" width="9" height="2.5" fill="#a9c4e6"/><rect x="0" y="4" width="13" height="2.5" fill="#6d9bd1"/><rect x="0" y="8" width="7" height="2.5" fill="#a9c4e6"/><rect x="0" y="11" width="10" height="2.5" fill="#e8a04c"/><path d="M0 14.5 H15" stroke="#9a9a9a" stroke-width="0.7"/></svg>
<svg style="position:absolute;left:74.9px;top:42.5px" width="16" height="16" viewBox="0 0 16 16"><path d="M0.5 0 V14.5 H15" fill="none" stroke="#9a9a9a" stroke-width="0.8"/><rect x="2" y="6" width="2.6" height="8" fill="#e8a04c"/><rect x="5" y="1" width="2.6" height="13" fill="#6d9bd1"/><rect x="9" y="4" width="2.6" height="10" fill="#a9c4e6"/><rect x="12" y="8" width="2.6" height="6" fill="#e8a04c"/></svg>
<svg style="position:absolute;left:97.2px;top:42.5px" width="16" height="16" viewBox="0 0 16 16"><rect x="0" y="1" width="14" height="5" fill="#6d9bd1"/><rect x="0" y="1" width="4" height="5" fill="#777"/><rect x="0" y="8" width="14" height="5" fill="#a9c4e6"/><rect x="0" y="8" width="6" height="5" fill="#777"/><path d="M0 0 V15 M0 14.5 H15" stroke="#9a9a9a" stroke-width="0.7"/></svg>
<svg style="position:absolute;left:119.5px;top:42.5px" width="16" height="16" viewBox="0 0 16 16"><path d="M0.5 0 V14.5 H15" fill="none" stroke="#9a9a9a" stroke-width="0.8"/><rect x="2.500" y="1" width="4.5" height="13" fill="#6d9bd1"/><rect x="2.500" y="1" width="4.5" height="5" fill="#4d6f9c"/><rect x="9" y="1" width="4.5" height="13" fill="#a9c4e6"/><rect x="9" y="1" width="4.5" height="7" fill="#6d9bd1"/></svg>
<svg style="position:absolute;left:8.0px;top:61.3px" width="16" height="16" viewBox="0 0 16 16"><path d="M0.5 0 V14.5 H15" fill="none" stroke="#9a9a9a" stroke-width="0.8"/><path d="M1 12 L6 6 L9 9 L14 2" fill="none" stroke="#f2f2f2" stroke-width="0.9"/><path d="M1 13 L8 4 L11 7 L14 5" fill="none" stroke="#9a9a9a" stroke-width="0.8"/></svg>
<div style="position:absolute;left:29px;top:60px;width:17px;height:17px;border:1.5px solid #e8d44a;background:#2a2a2a"></div><svg style="position:absolute;left:30.3px;top:61.3px" width="16" height="16" viewBox="0 0 16 16"><path d="M1.500 14 V8 L4.500 5 L7 8 L10 4 L13 7 L14.5 6 V14 Z" fill="#808080"/><path d="M1.500 14 V11 L5 8 L8 11 L11 8 L14.5 10 V14 Z" fill="#6a6a78"/></svg>
<svg style="position:absolute;left:52.6px;top:61.3px" width="16" height="16" viewBox="0 0 16 16"><path d="M0 15 V5 L3 2 L5.500 5 L8 1 L11 5 L13 2 L15 5 V15 Z" fill="#e8a04c"/><path d="M0 15 V9 L3 6 L5.500 9 L8 6 L11 10 L13 7 L15 9 V15 Z" fill="#6d9bd1"/><path d="M0 15 V13 L3 11 L5.500 13 L8 11 L11 13.500 L13 12 L15 13 V15 Z" fill="#e8a04c"/></svg>
<svg style="position:absolute;left:74.9px;top:61.3px" width="16" height="16" viewBox="0 0 16 16"><path d="M0.5 0 V14.5 H15" fill="none" stroke="#9a9a9a" stroke-width="0.8"/><rect x="3" y="4" width="3.2" height="10" fill="#e8a04c"/><rect x="3" y="10" width="3.2" height="4" fill="#a9c4e6"/><rect x="8" y="6" width="3.2" height="8" fill="#e8a04c"/><rect x="8" y="11" width="3.2" height="3" fill="#a9c4e6"/><path d="M1 5 L6 2 L10 4 L14 1" fill="none" stroke="#9a9a9a" stroke-width="0.8"/><path d="M14.5 0 V14" stroke="#9a9a9a" stroke-width="0.7"/></svg>
<svg style="position:absolute;left:97.2px;top:61.3px" width="16" height="16" viewBox="0 0 16 16"><path d="M0.5 0 V14.5 H15" fill="none" stroke="#9a9a9a" stroke-width="0.8"/><rect x="2" y="7" width="2.4" height="7" fill="#e8a04c"/><rect x="4.500" y="3" width="2.4" height="11" fill="#a9c4e6"/><rect x="8.500" y="5" width="2.4" height="9" fill="#e8a04c"/><rect x="11" y="8" width="2.4" height="6" fill="#a9c4e6"/><path d="M1 6 L6 1.500 L10 3 L14 2" fill="none" stroke="#9a9a9a" stroke-width="0.8"/><path d="M14.5 0 V14" stroke="#9a9a9a" stroke-width="0.7"/></svg>
<svg style="position:absolute;left:119.5px;top:61.3px" width="16" height="16" viewBox="0 0 16 16"><path d="M1 5 H4 L7 3 H9 L12 2 H15 V8 H12 L9 9 H7 L4 10 H1 Z" fill="#6d9bd1" opacity="0.8"/><rect x="1" y="5" width="3.2" height="10" fill="#e8a04c"/><rect x="6.500" y="3" width="3.2" height="12" fill="#e8a04c"/><rect x="12" y="2" width="3" height="13" fill="#e8a04c"/><rect x="1" y="10" width="3.2" height="5" fill="#f3d3a8"/><rect x="6.500" y="9" width="3.2" height="6" fill="#f3d3a8"/><rect x="12" y="8" width="3" height="7" fill="#f3d3a8"/></svg>
<svg style="position:absolute;left:8.0px;top:80.1px" width="16" height="16" viewBox="0 0 16 16"><path d="M0.5 0 V14.5 H15" fill="none" stroke="#9a9a9a" stroke-width="0.8"/><rect x="2" y="3" width="2.5" height="11" fill="#f2f2f2"/><rect x="5" y="3" width="2.5" height="5" fill="#e8a04c"/><rect x="8" y="8" width="2.5" height="4" fill="#e8a04c"/><rect x="11" y="2" width="2.5" height="12" fill="#f2f2f2"/><path d="M2 3 V14 H4.500 V3 M11 2 V14 H13.500 V2" fill="none" stroke="#9a9a9a" stroke-width="0.5"/></svg>
<svg style="position:absolute;left:30.3px;top:80.1px" width="16" height="16" viewBox="0 0 16 16"><path d="M0.5 0 V14.5 H15" fill="none" stroke="#9a9a9a" stroke-width="0.8"/><circle cx="4" cy="4" r="1.1" fill="#9a9a9a"/><circle cx="9" cy="3" r="1.2" fill="#a9c4e6"/><circle cx="7" cy="8" r="1.6" fill="#e8a04c"/><circle cx="12" cy="7" r="1.1" fill="#9a9a9a"/><circle cx="4" cy="11" r="1" fill="#a9c4e6"/><circle cx="11" cy="11.500" r="1.2" fill="#9a9a9a"/></svg>
<svg style="position:absolute;left:52.6px;top:80.1px" width="16" height="16" viewBox="0 0 16 16"><circle cx="8" cy="8" r="7" fill="#6d9bd1"/><path d="M8 8 L8 1 A7 7 0 0 0 2.200 12 Z" fill="#f5ddb8"/><path d="M8 8 L2.200 12 A7 7 0 0 0 6 14.700 Z" fill="#e8a04c"/><path d="M8 8 L8 1 M8 8 L2.200 12 M8 8 L6 14.700" stroke="#3c3c3c" stroke-width="0.8"/></svg>
<svg style="position:absolute;left:74.9px;top:80.1px" width="16" height="16" viewBox="0 0 16 16"><circle cx="8" cy="8" r="5.2" fill="none" stroke="#6d9bd1" stroke-width="3.6"/><path d="M8 2.800 A5.2 5.2 0 0 1 13 6.500" fill="none" stroke="#f5ddb8" stroke-width="3.600"/><path d="M13 6.500 A5.2 5.2 0 0 1 13.100 9" fill="none" stroke="#e8a04c" stroke-width="3.600"/></svg>
<svg style="position:absolute;left:97.2px;top:80.1px" width="16" height="16" viewBox="0 0 16 16"><rect x="0.5" y="0.5" width="6" height="9" fill="#f2f2f2"/><rect x="7.500" y="0.5" width="7.5" height="5" fill="#a9c4e6"/><rect x="7.500" y="6.500" width="7.5" height="3" fill="#f2f2f2"/><rect x="0.5" y="10.500" width="4.5" height="4.5" fill="#f2f2f2"/><rect x="6" y="10.500" width="4" height="4.500" fill="#f2f2f2"/><rect x="11" y="10.500" width="4" height="4.500" fill="#f2f2f2"/></svg>
<svg style="position:absolute;left:119.5px;top:80.1px" width="16" height="16" viewBox="0 0 16 16"><circle cx="8" cy="8" r="6.800" fill="#e6f0fa" stroke="#f2f2f2" stroke-width="0.8"/><path d="M1.200 8 H14.800 M8 1.200 V14.800 M2.500 4.500 H13.500 M2.500 11.500 H13.500" stroke="#7fa6d4" stroke-width="0.8" fill="none"/><ellipse cx="8" cy="8" rx="3.300" ry="6.800" fill="none" stroke="#7fa6d4" stroke-width="0.8"/></svg>
<svg style="position:absolute;left:8.0px;top:98.9px" width="16" height="16" viewBox="0 0 16 16"><path d="M0 2 L5 3 L9 2 L12 4 L11 8 L13 11 L9 13 L6 15 L3 12 L1 10 Z" fill="#6d9bd1"/><path d="M0 2 L5 3 L4 7 L1 10 Z" fill="#a9c4e6"/><path d="M5 3 L9 2 L12 4 L11 8 L6 8 L4 7 Z" fill="#4f79ae"/><path d="M6 8 L11 8 L13 11 L9 13 L6 15 L3 12 Z" fill="#c8d8ec"/><path d="M13.500 1 L14.700 1 L14.400 7 L13.800 7 Z" fill="#e8a04c"/><circle cx="14.100" cy="9" r="0.9" fill="#e8a04c"/></svg>
<svg style="position:absolute;left:30.3px;top:98.9px" width="16" height="16" viewBox="0 0 16 16"><rect x="0.5" y="1" width="15" height="3" fill="#6d9bd1"/><rect x="2.500" y="5" width="11" height="3" fill="#e8a04c"/><rect x="4.500" y="9" width="7" height="3" fill="#a9c4e6"/><rect x="6" y="13" width="4" height="2.500" fill="#6d9bd1"/></svg>
<svg style="position:absolute;left:52.6px;top:98.9px" width="16" height="16" viewBox="0 0 16 16"><path d="M2 13 A6 6 0 0 1 14 13" fill="none" stroke="#e8a04c" stroke-width="3"/><path d="M11 7.800 A6 6 0 0 1 14 13" fill="none" stroke="#6fa08a" stroke-width="3"/></svg>
<svg style="position:absolute;left:74.9px;top:98.9px" width="16" height="16" viewBox="0 0 16 16"><rect x="0.5" y="2.500" width="15" height="11" fill="#f2f2f2"/><text x="8" y="10" text-anchor="middle" style="font-size:6.500px;font-weight:bold;fill:#6d9bd1;font-family:Liberation Sans,sans-serif">123</text><path d="M3 11.800 H13" stroke="#888" stroke-width="0.8"/></svg>
<svg style="position:absolute;left:97.2px;top:98.9px" width="16" height="16" viewBox="0 0 16 16"><rect x="1.500" y="0.500" width="13" height="15" fill="#f2f2f2"/><rect x="1.500" y="0.500" width="2" height="15" fill="#bbb"/><path d="M5 3 H9 M5 7.500 H9 M5 12 H9" stroke="#6d9bd1" stroke-width="1.6"/><path d="M10 3 H13 M5 5 H12 M5 9.500 H12" stroke="#aaa" stroke-width="0.8"/></svg>
<svg style="position:absolute;left:119.5px;top:98.9px" width="16" height="16" viewBox="0 0 16 16"><rect x="0.5" y="2.500" width="15" height="11" fill="#f2f2f2"/><path d="M3 9 L6 5.500 L8 8 Z" fill="#e8a04c"/><path d="M9 6 L10.500 4.500 L12 6 L10.500 8 Z" fill="#e8a04c"/><path d="M3 11 H13" stroke="#888" stroke-width="0.8"/></svg>
<svg style="position:absolute;left:8.0px;top:117.7px" width="16" height="16" viewBox="0 0 16 16"><rect x="0.5" y="0.500" width="11" height="14" fill="#f2f2f2"/><rect x="0.5" y="0.500" width="11" height="2.500" fill="#6d9bd1"/><path d="M2 5.500 H4 M2 8.500 H4 M2 11.500 H4" stroke="#e8a04c" stroke-width="1.4"/><path d="M7 7 H15.500 L12.500 10.500 V15 L10.500 13.500 V10.500 Z" fill="#8a8a8a"/></svg>
<svg style="position:absolute;left:30.3px;top:117.7px" width="16" height="16" viewBox="0 0 16 16"><rect x="1" y="0.500" width="14" height="15" fill="#f2f2f2"/><path d="M1 5.500 H15 M1 10.500 H15 M5.700 3 V15.500 M10.400 3 V15.500" stroke="#3c3c3c" stroke-width="1"/><rect x="1" y="0.500" width="14" height="2.700" fill="#6d9bd1"/></svg>
<svg style="position:absolute;left:52.6px;top:117.7px" width="16" height="16" viewBox="0 0 16 16"><rect x="1" y="0.500" width="14" height="15" fill="#c9d7ec"/><rect x="1" y="0.500" width="4.500" height="15" fill="#f2f2f2"/><path d="M1 5.500 H15 M1 10.500 H15 M5.700 3 V15.500 M10.400 3 V15.500" stroke="#3c3c3c" stroke-width="1"/><rect x="1" y="0.500" width="14" height="2.700" fill="#6d9bd1"/></svg>
<svg style="position:absolute;left:74.9px;top:117.7px" width="16" height="16" viewBox="0 0 16 16"><text x="7.500" y="14.500" text-anchor="middle" style="font-size:17px;font-weight:bold;fill:#7ea6c9;font-family:Liberation Sans,sans-serif">R</text></svg>
<svg style="position:absolute;left:97.2px;top:117.7px" width="16" height="16" viewBox="0 0 16 16"><circle cx="3" cy="7" r="1" fill="#f2f2f2"/><circle cx="8" cy="7" r="1" fill="#f2f2f2"/><circle cx="13" cy="7" r="1" fill="#f2f2f2"/></svg>
<svg style="position:absolute;left:16px;top:143px" width="18" height="16" viewBox="0 0 18 16"><rect x="0.7" y="0.700" width="16.500" height="14.500" fill="none" stroke="#ddd" stroke-width="1.2" stroke-dasharray="1.2 1"/><path d="M0.700 5.500 H17.300 M0.700 10.300 H17.300" stroke="#ddd" stroke-width="1.1" stroke-dasharray="1.2 1"/></svg>
<svg style="position:absolute;left:48px;top:142px" width="17" height="18" viewBox="0 0 17 18"><rect x="1" y="0.700" width="12" height="4.600" rx="1" fill="none" stroke="#fff" stroke-width="1.3"/><path d="M13 3 H15.500 V8 H8 V10.500" fill="none" stroke="#fff" stroke-width="1.2"/><rect x="6.300" y="10.500" width="3.400" height="6.800" fill="none" stroke="#fff" stroke-width="1.2"/></svg>
<svg style="position:absolute;left:80px;top:142px" width="18" height="18" viewBox="0 0 18 18"><circle cx="7.500" cy="7.500" r="6.300" fill="none" stroke="#ddd" stroke-width="1.2"/><path d="M12 12 L17 17" stroke="#ddd" stroke-width="1.5"/><path d="M2 8.500 L5 6 L8 8 L12.500 4.500" fill="none" stroke="#ddd" stroke-width="0.9"/><path d="M4 12 V9.500 M6.500 13 V9 M9 13 V9.500 M11.500 11.500 V8" stroke="#ddd" stroke-width="1"/></svg>
<div style="position:absolute;left:42px;top:163px;width:29px;height:2px;background:#e8c52c"></div>
<div style="position:absolute;left:0;top:165px;width:158px;height:330px;background:#464646"></div>
<div style="position:absolute;left:4px;top:169px;width:150px;height:23px;background:#1f1f1f;border:1px solid #151515"></div>
<svg style="position:absolute;left:13px;top:174px" width="13" height="13" viewBox="0 0 13 13"><circle cx="8" cy="5" r="3.800" fill="none" stroke="#aaa" stroke-width="1.1"/><path d="M5.300 7.700 L1 12" stroke="#aaa" stroke-width="1.2"/></svg>
<div class="pt" style="left:33px;top:175px;color:#b5b5b5;font-size:11px">Search</div>
<svg style="position:absolute;left:8px;top:199px" width="10" height="7" viewBox="0 0 10 7"><path d="M1 6 L5 1.500 L9 6" fill="none" stroke="#ddd" stroke-width="1.1"/></svg>
<div class="pt" style="left:22px;top:197px;font-weight:bold;color:#e8e8e8;transform:scaleX(.8)">Y-Axis</div>
<div class="pt" style="left:100px;top:197px">On</div>
<div style="position:absolute;left:124px;top:203px;width:14px;height:2px;background:#fff"></div><div style="position:absolute;left:135.500px;top:197.700px;width:12.500px;height:12.500px;border-radius:6.500px;background:#fff"></div>
<div style="position:absolute;left:0;top:216px;width:152px;height:1px;background:#525252"></div>
<div class="pt" style="left:8px;top:226px">Position</div><div class="dd" style="left:75px;top:223px;width:72px;color:#fff"><span class="pt" style="position:absolute;left:4px;top:2px;color:#fff">Left</span></div><div class="arr" style="left:137px;top:231px"></div>
<div class="pt" style="left:8px;top:254px">Scale type</div><div class="dd" style="left:75px;top:251px;width:72px;color:#fff"><span class="pt" style="position:absolute;left:4px;top:2px;color:#fff">Log</span></div><div class="arr" style="left:137px;top:259px"></div>
<div style="position:absolute;left:129.5px;top:247px;width:21.500px;height:25px;border:2px solid #efe312"></div>
<div class="pt" style="left:8px;top:283px">Start</div>
<div class="pt" style="left:8px;top:311px">End</div><div class="dd" style="left:75px;top:308px;width:72px;color:#8c8c8c"><span class="pt" style="position:absolute;left:4px;top:2px;color:#8c8c8c">Auto</span></div>
<div class="pt" style="left:8px;top:339px">Color</div>
<div class="dd" style="left:109px;top:336px;width:36px;"></div><div style="position:absolute;left:114px;top:340px;width:11px;height:10px;background:#b0522d;border:1px solid #8a3d20"></div><div class="arr" style="left:130px;top:344px"></div>
<div class="pt" style="left:8px;top:368px">Text size</div><div class="dd" style="left:97px;top:365px;width:49px;color:#fff"><span class="pt" style="position:absolute;left:7px;top:2px;color:#fff">15</span></div><div style="position:absolute;left:134px;top:369px;width:0;height:0;border-left:3.500px solid transparent;border-right:3.500px solid transparent;border-bottom:4px solid #ddd"></div><div style="position:absolute;left:134px;top:375px;width:0;height:0;border-left:3.500px solid transparent;border-right:3.500px solid transparent;border-top:4px solid #ddd"></div>
<div class="pt" style="left:8px;top:397px">Font family</div><div class="dd" style="left:75px;top:394px;width:72px;color:#fff"><span class="pt" style="position:absolute;left:4px;top:2px;color:#fff">Segoe UI</span></div><div class="arr" style="left:137px;top:402px"></div>
<div class="pt" style="left:8px;top:425px">Display u...</div><div class="dd" style="left:75px;top:422px;width:72px;color:#fff"><span class="pt" style="position:absolute;left:4px;top:2px;color:#fff">Thousands</span></div><div class="arr" style="left:137px;top:430px"></div>
<div class="pt" style="left:8px;top:453px">Value deci...</div><div class="dd" style="left:97px;top:450px;width:49px;color:#8c8c8c"><span class="pt" style="position:absolute;left:2px;top:2px;color:#8c8c8c">Auto</span></div><div style="position:absolute;left:134px;top:454px;width:0;height:0;border-left:3.500px solid transparent;border-right:3.500px solid transparent;border-bottom:4px solid #ddd"></div><div style="position:absolute;left:134px;top:460px;width:0;height:0;border-left:3.500px solid transparent;border-right:3.500px solid transparent;border-top:4px solid #ddd"></div>
<div class="pt" style="left:8px;top:482px">Title</div>
<div class="pt" style="left:95px;top:482px">Off</div>
<div style="position:absolute;left:118px;top:481px;width:12px;height:12px;border-radius:6px;border:1.500px solid #fff"></div><div style="position:absolute;left:129px;top:487px;width:13px;height:2px;background:#fff"></div>
<div style="position:absolute;left:75px;top:270px;width:71px;height:18px;background:#595959;border:1px solid #6a6a6a"></div><div class="pt" style="left:80px;top:273px;font-size:10px">Linear</div>
<div style="position:absolute;left:75px;top:288px;width:71px;height:17px;background:#b3b3b3"></div><div class="pt" style="left:80px;top:290px;font-size:10px;color:#fff">Log</div>
<div style="position:absolute;left:152px;top:232px;width:4px;height:110px;background:#6b6b6b"></div>
</div>
<div id="fields" style="position:absolute;left:998px;top:116px;width:24px;height:491px;background:#202020;border-left:1px solid #111">

<svg style="position:absolute;left:9px;top:13px" width="8" height="12" viewBox="0 0 8 12"><path d="M6.500 1 L1.500 6 L6.500 11" fill="none" stroke="#a8a8a8" stroke-width="1.2"/></svg>
<div style="position:absolute;left:11.5px;top:68.5px;width:0;height:0"><div style="position:absolute;white-space:nowrap;transform:translate(-50%,-50%) rotate(90deg);color:#fff;font-weight:bold;font-size:10.5px;letter-spacing:0.2px;line-height:12px">FIELDS</div></div>

</div>
</div>
</body></html>
